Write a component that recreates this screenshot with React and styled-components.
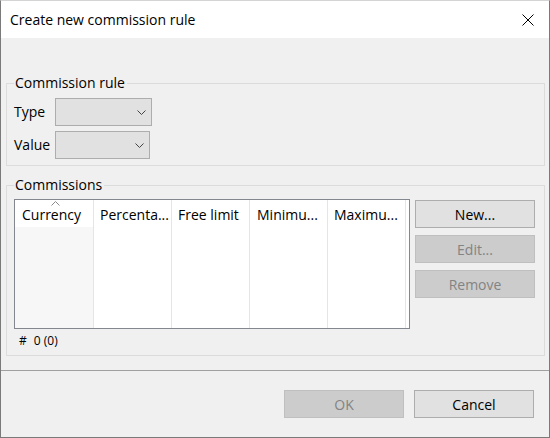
import React from "react";
import styled, { createGlobalStyle } from "styled-components";

const GlobalStyle = createGlobalStyle`
  html, body { margin: 0; padding: 0; background: #f0f0f0; }
  body {
    font-family: "Open Sans", "Noto Sans", "DejaVu Sans", sans-serif;
    font-size: 14px;
    color: #000;
  }
  *, *::before, *::after { box-sizing: border-box; }
`;

const Window = styled.div`
  width: 550px;
  height: 438px;
  display: flex;
  flex-direction: column;
  background: #f0f0f0;
  border: 1px solid #7a7a7a;
  border-top-color: #d4d4d4;
  overflow: hidden;
`;

const TitleBar = styled.div`
  height: 37px;
  flex-shrink: 0;
  background: #fff;
  display: flex;
  align-items: flex-start;
`;

const Title = styled.div`
  flex: 1;
  padding: 9px 0 0 9px;
  line-height: 20px;
  white-space: nowrap;
`;

const CloseButton = styled.div`
  width: 42px;
  height: 37px;
  display: flex;
  align-items: center;
  justify-content: center;
`;

const Body = styled.div`
  display: flex;
  flex-direction: column;
  padding: 36px 4px 0 5px;
`;

const GroupBox = styled.fieldset`
  margin: ${(p) => p.$mt || 0}px 0 0;
  padding: ${(p) => p.$pt}px 9px ${(p) => p.$pb}px 7px;
  border: 1px solid #dcdcdc;
  min-width: 0;
`;

const Legend = styled.legend`
  padding: 0 2px 0 1px;
  margin: 0;
  line-height: 18px;
`;

const FieldRow = styled.div`
  display: flex;
  align-items: center;
  height: 28px;
  & + & { margin-top: 5px; }
`;

const FieldLabel = styled.div`
  width: 41px;
  line-height: 28px;
`;

const Combo = styled.div`
  width: ${(p) => p.$w}px;
  height: 28px;
  background: #e1e1e1;
  border: 1px solid #adadad;
  display: flex;
  align-items: center;
  justify-content: flex-end;
  padding-right: 5px;
`;

const ListRow = styled.div`
  display: flex;
  gap: 5px;
`;

const ListView = styled.div`
  flex: 1;
  height: 130px;
  border: 1px solid #828790;
  background: #fff;
  display: flex;
`;

const Column = styled.div`
  width: ${(p) => p.$w}px;
  flex-shrink: 0;
  border-right: 1px solid #e5e5e5;
  display: flex;
  flex-direction: column;
`;

const HeaderCell = styled.div`
  position: relative;
  height: 27px;
  padding: 5px 3px 0 ${(p) => p.$pl}px;
  line-height: 19px;
  white-space: nowrap;
  overflow: hidden;
  background: #fff;
`;

const SortArrow = styled.svg`
  position: absolute;
  top: 1px;
  left: 36px;
`;

const ColumnBody = styled.div`
  flex: 1;
  background: ${(p) => (p.$sorted ? "#f7f7f7" : "#fff")};
`;

const ButtonColumn = styled.div`
  width: 120px;
  display: flex;
  flex-direction: column;
  gap: 7px;
  margin-top: 1px;
`;

const Button = styled.button`
  width: 120px;
  height: 28px;
  padding: 0;
  margin: 0;
  font: inherit;
  line-height: 19px;
  display: flex;
  align-items: center;
  justify-content: center;
  background: ${(p) => (p.$disabled ? "#cccccc" : "#e1e1e1")};
  border: 1px solid ${(p) => (p.$disabled ? "#bfbfbf" : "#adadad")};
  color: ${(p) => (p.$disabled ? "#838383" : "#000")};
  border-radius: 0;
`;

const Status = styled.div`
  margin-top: 2px;
  height: 20px;
  line-height: 20px;
  font-size: 12px;
  padding-left: 5px;
  display: flex;
  gap: 7px;
`;

const Footer = styled.div`
  flex: 1;
  margin-top: 14px;
  border-top: 1px solid #a0a0a0;
  display: flex;
  justify-content: flex-end;
  align-items: flex-start;
  gap: 10px;
  padding: 19px 15px 0 0;
`;

const Chevron = () => (
  <svg width="9" height="5" viewBox="0 0 9 5">
    <polyline points="0.5,0.5 4.5,4.5 8.5,0.5" fill="none" stroke="#444" strokeWidth="1" />
  </svg>
);

const columns = [
  { label: "Currency", w: 79, sorted: true, pl: 7 },
  { label: "Percenta...", w: 78, pl: 6 },
  { label: "Free limit", w: 78, pl: 6 },
  { label: "Minimu...", w: 78, pl: 7 },
  { label: "Maximu...", w: 78, pl: 6 },
];

export default function App() {
  return (
    <>
      <GlobalStyle />
      <Window>
        <TitleBar>
          <Title>Create new commission rule</Title>
          <CloseButton>
            <svg width="12" height="12" viewBox="0 0 12 12">
              <path d="M0.5 0.5 L11.5 11.5 M11.5 0.5 L0.5 11.5" stroke="#000" strokeWidth="1" fill="none" />
            </svg>
          </CloseButton>
        </TitleBar>
        <Body>
          <GroupBox $pt={6} $pb={6}>
            <Legend>Commission rule</Legend>
            <FieldRow>
              <FieldLabel>Type</FieldLabel>
              <Combo $w={97}><Chevron /></Combo>
            </FieldRow>
            <FieldRow>
              <FieldLabel>Value</FieldLabel>
              <Combo $w={95}><Chevron /></Combo>
            </FieldRow>
          </GroupBox>
          <GroupBox $mt={10} $pt={5} $pb={4}>
            <Legend>Commissions</Legend>
            <ListRow>
              <ListView>
                {columns.map((c) => (
                  <Column key={c.label} $w={c.w}>
                    <HeaderCell $pl={c.pl}>
                      {c.sorted && (
                        <SortArrow width="9" height="5" viewBox="0 0 9 5">
                          <polyline points="0.5,4.5 4.5,0.5 8.5,4.5" fill="none" stroke="#8a8a8a" strokeWidth="1" />
                        </SortArrow>
                      )}
                      {c.label}
                    </HeaderCell>
                    <ColumnBody $sorted={c.sorted} />
                  </Column>
                ))}
              </ListView>
              <ButtonColumn>
                <Button>New...</Button>
                <Button $disabled>Edit...</Button>
                <Button $disabled>Remove</Button>
              </ButtonColumn>
            </ListRow>
            <Status>
              <span>#</span>
              <span>0 (0)</span>
            </Status>
          </GroupBox>
        </Body>
        <Footer>
          <Button $disabled>OK</Button>
          <Button>Cancel</Button>
        </Footer>
      </Window>
    </>
  );
}
